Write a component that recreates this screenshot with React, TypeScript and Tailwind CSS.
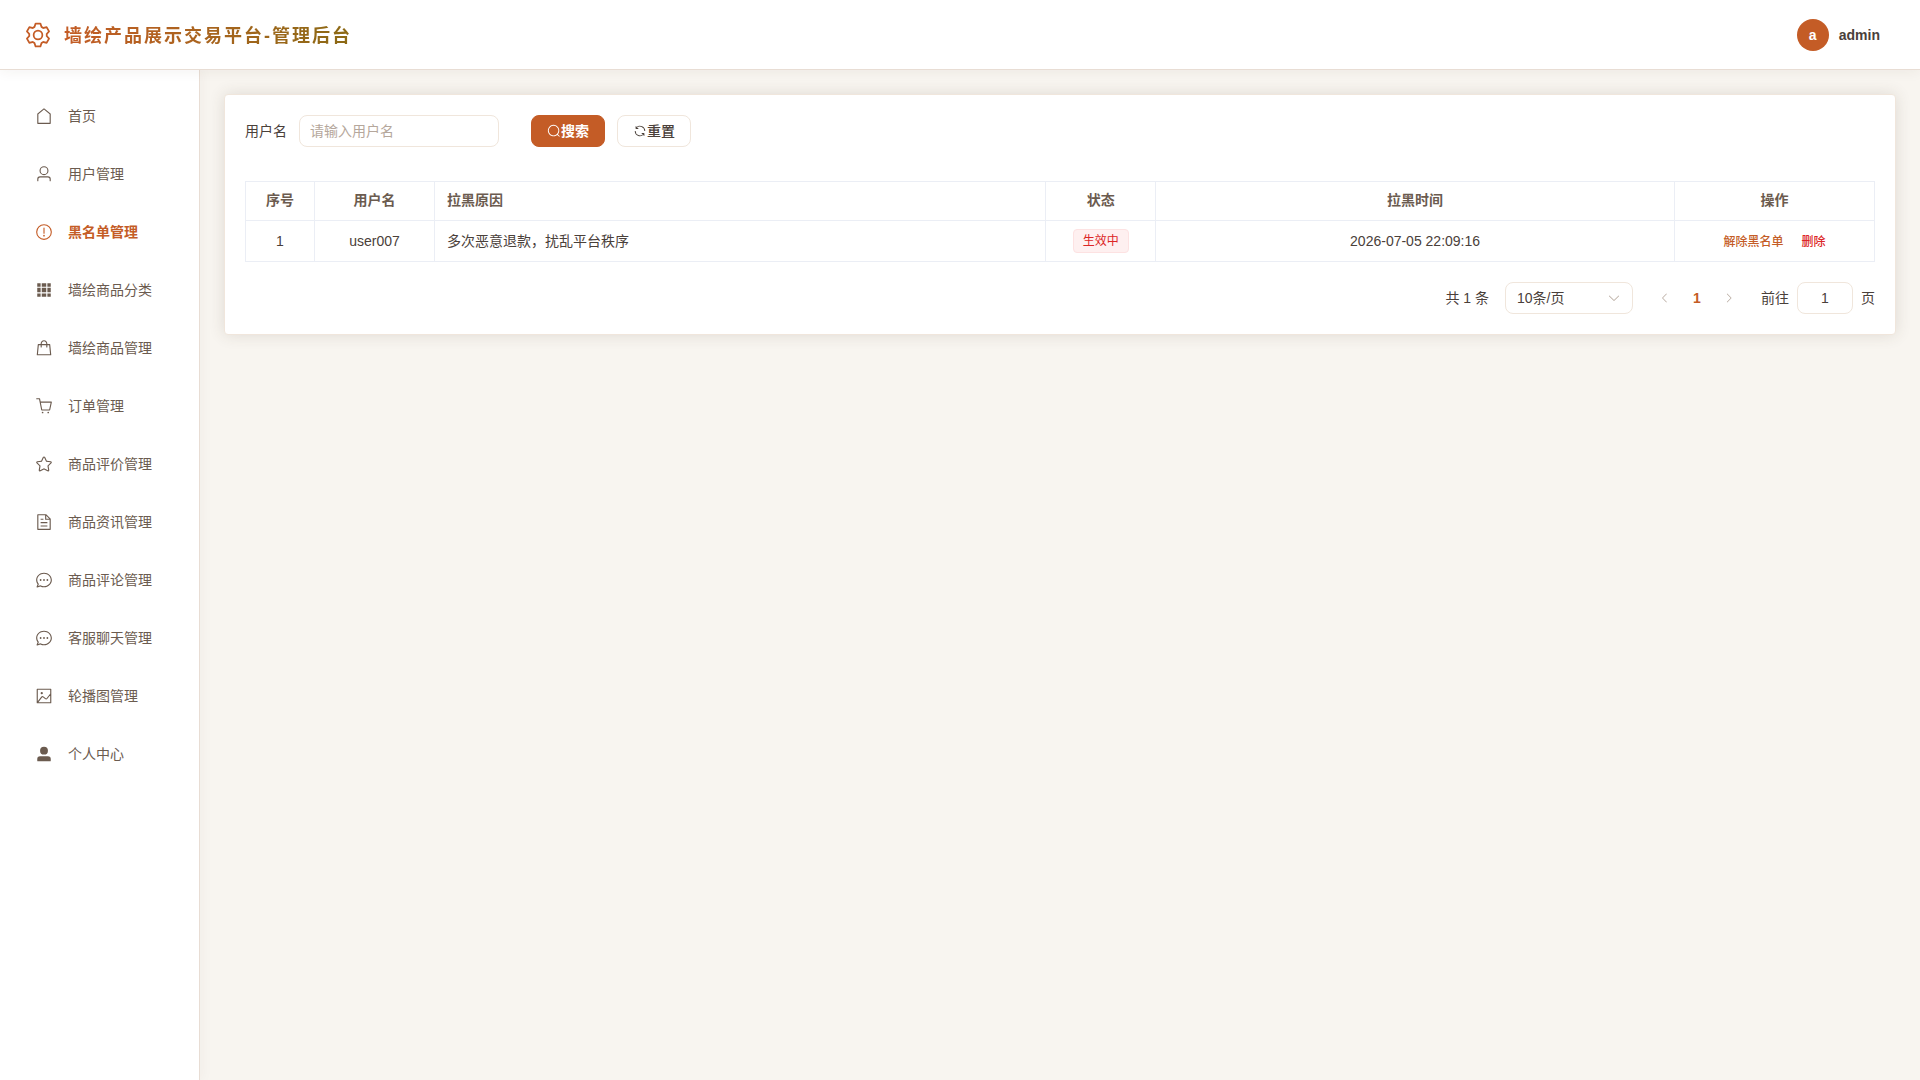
import React, { useState } from 'react';

const ICONS = {
  setting:
    'M600.704 64a32 32 0 0 1 30.464 22.208l35.2 109.376c14.784 7.232 28.928 15.36 42.432 24.512l112.384-24.192a32 32 0 0 1 34.432 15.36L944.32 364.8a32 32 0 0 1-4.032 37.504l-77.12 85.12a357.12 357.12 0 0 1 0 49.024l77.12 85.248a32 32 0 0 1 4.032 37.504l-88.704 153.6a32 32 0 0 1-34.432 15.296L708.8 803.904c-13.44 9.088-27.648 17.28-42.368 24.512l-35.264 109.376A32 32 0 0 1 600.704 960H423.296a32 32 0 0 1-30.464-22.208L357.696 828.48a351.616 351.616 0 0 1-42.56-24.64l-112.32 24.256a32 32 0 0 1-34.432-15.36L79.68 659.2a32 32 0 0 1 4.032-37.504l77.12-85.248a357.12 357.12 0 0 1 0-48.896l-77.12-85.248A32 32 0 0 1 79.68 364.8l88.704-153.6a32 32 0 0 1 34.432-15.296l112.32 24.256c13.568-9.152 27.776-17.408 42.56-24.64l35.2-109.312A32 32 0 0 1 423.232 64H600.64zm-23.424 64H446.72l-36.352 113.088-24.512 11.968a294.113 294.113 0 0 0-34.816 20.096l-22.656 15.36-116.224-25.088-65.28 113.152 79.68 88.192-1.92 27.136a293.12 293.12 0 0 0 0 40.192l1.92 27.136-79.808 88.192 65.344 113.152 116.224-25.024 22.656 15.296a294.113 294.113 0 0 0 34.816 20.096l24.512 11.968L446.72 896h130.688l36.48-113.152 24.448-11.904a288.282 288.282 0 0 0 34.752-20.096l22.592-15.296 116.288 25.024 65.28-113.152-79.744-88.192 1.92-27.136a293.12 293.12 0 0 0 0-40.256l-1.92-27.136 79.808-88.128-65.344-113.152-116.288 24.96-22.592-15.232a287.616 287.616 0 0 0-34.752-20.096l-24.448-11.904L577.344 128zM512 320a192 192 0 1 1 0 384 192 192 0 0 1 0-384zm0 64a128 128 0 1 0 0 256 128 128 0 0 0 0-256z',
  house:
    'M192 413.952V896h640V413.952L512 147.328 192 413.952zM139.52 374.4l352-293.312a32 32 0 0 1 40.96 0l352 293.312A32 32 0 0 1 896 398.976V928a32 32 0 0 1-32 32H160a32 32 0 0 1-32-32V398.976a32 32 0 0 1 11.52-24.576z',
  user:
    'M512 512a192 192 0 1 0 0-384 192 192 0 0 0 0 384zm0 64a256 256 0 1 1 0-512 256 256 0 0 1 0 512zm320 320v-96a96 96 0 0 0-96-96H288a96 96 0 0 0-96 96v96a32 32 0 1 1-64 0v-96a160 160 0 0 1 160-160h448a160 160 0 0 1 160 160v96a32 32 0 1 1-64 0z',
  warning:
    'M512 64a448 448 0 1 1 0 896 448 448 0 0 1 0-896zm0 832a384 384 0 0 0 0-768 384 384 0 0 0 0 768zm48-176a48 48 0 1 1-96 0 48 48 0 0 1 96 0zm-48-464a32 32 0 0 1 32 32v288a32 32 0 0 1-64 0V288a32 32 0 0 1 32-32z',
  grid:
    'M640 384v256H384V384h256zm64 0h192v256H704V384zm-64 512H384V704h256v192zm64 0V704h192v192H704zm-64-768v192H384V128h256zm64 0h192v192H704V128zM320 384v256H128V384h192zm0 512H128V704h192v192zm0-768v192H128V128h192z',
  goods:
    'M320 288v-22.336C320 154.688 405.504 64 512 64s192 90.688 192 201.664v22.4h131.072a32 32 0 0 1 31.808 28.8l57.6 576a32 32 0 0 1-31.808 35.2H131.328a32 32 0 0 1-31.808-35.2l57.6-576a32 32 0 0 1 31.808-28.8H320zm64 0h256v-22.336C640 189.248 582.272 128 512 128c-70.272 0-128 61.248-128 137.664v22.4zm-64 64H217.92l-51.2 512h690.56l-51.264-512H704v96a32 32 0 1 1-64 0v-96H384v96a32 32 0 0 1-64 0v-96z',
  cart:
    'M432 928a48 48 0 1 1 0-96 48 48 0 0 1 0 96zm320 0a48 48 0 1 1 0-96 48 48 0 0 1 0 96zM96 128a32 32 0 0 1 0-64h160a32 32 0 0 1 31.36 25.728L320.64 256H928a32 32 0 0 1 31.296 38.72l-96 448A32 32 0 0 1 832 768H384a32 32 0 0 1-31.36-25.728L229.76 128H96zm314.24 576h395.904l82.304-384H333.44l76.8 384z',
  star:
    'm512 747.84 228.16 119.936a6.4 6.4 0 0 0 9.28-6.72l-43.52-254.08 184.512-179.904a6.4 6.4 0 0 0-3.52-10.88l-255.104-37.12L517.76 147.904a6.4 6.4 0 0 0-11.52 0L392.192 379.072l-255.104 37.12a6.4 6.4 0 0 0-3.52 10.88L318.08 606.976l-43.584 254.08a6.4 6.4 0 0 0 9.28 6.72L512 747.84zM313.6 924.48a70.4 70.4 0 0 1-102.144-74.24l37.888-220.928L88.96 472.96A70.4 70.4 0 0 1 128 352.896l221.76-32.256 99.2-200.96a70.4 70.4 0 0 1 126.208 0l99.2 200.96 221.824 32.256a70.4 70.4 0 0 1 39.04 120.064L774.72 629.376l37.888 220.928a70.4 70.4 0 0 1-102.144 74.24L512 820.096l-198.4 104.32z',
  document:
    'M832 384H576V128H192v768h640V384zm-26.496-64L640 154.496V320h165.504zM160 64h480l256 256v608a32 32 0 0 1-32 32H160a32 32 0 0 1-32-32V96a32 32 0 0 1 32-32zm160 448h384v64H320v-64zm0-192h160v64H320v-64zm0 384h384v64H320v-64z',
  chat:
    'm174.72 855.68 135.296-45.12 23.68 11.84C388.096 849.536 448.576 864 512 864c211.84 0 384-166.784 384-352S723.84 160 512 160 128 326.784 128 512c0 69.12 24.96 139.264 70.848 199.232l22.08 28.8-46.272 115.584zm-45.248 82.56A32 32 0 0 1 89.6 896l58.368-145.92C94.72 680.32 64 596.864 64 512 64 299.904 256 96 512 96s448 203.904 448 416-192 416-448 416a461.056 461.056 0 0 1-206.912-48.384l-175.616 58.56zM512 563.2a51.2 51.2 0 1 1 0-102.4 51.2 51.2 0 0 1 0 102.4zm192 0a51.2 51.2 0 1 1 0-102.4 51.2 51.2 0 0 1 0 102.4zm-384 0a51.2 51.2 0 1 1 0-102.4 51.2 51.2 0 0 1 0 102.4z',
  picture:
    'M160 160v704h704V160H160zm-32-64h768a32 32 0 0 1 32 32v768a32 32 0 0 1-32 32H128a32 32 0 0 1-32-32V128a32 32 0 0 1 32-32zM384 288q64 0 64 64t-64 64q-64 0-64-64t64-64zM185.408 876.992l-50.816-38.912L350.72 556.032a96 96 0 0 1 134.592-17.856l1.856 1.472 122.88 99.136a32 32 0 0 0 44.992-4.864l216-269.888 49.92 39.936-215.808 269.824-.256.32a96 96 0 0 1-135.04 14.464l-122.88-99.072-.64-.512a32 32 0 0 0-44.8 5.952L185.408 876.992z',
  userFilled:
    'M288 320a224 224 0 1 0 448 0 224 224 0 1 0-448 0zm544 608H160a32 32 0 0 1-32-32v-96a160 160 0 0 1 160-160h448a160 160 0 0 1 160 160v96a32 32 0 0 1-32 32z',
  search:
    'm795.904 750.72 124.992 124.928a32 32 0 0 1-45.248 45.248L750.656 795.904a416 416 0 1 1 45.248-45.248zM480 832a352 352 0 1 0 0-704 352 352 0 0 0 0 704z',
  refresh:
    'M771.776 794.88A384 384 0 0 1 128 512h64a320 320 0 0 0 555.712 216.448H654.72a32 32 0 1 1 0-64h149.056a32 32 0 0 1 32 32v148.928a32 32 0 1 1-64 0v-50.56zM276.288 295.616h92.992a32 32 0 0 1 0 64H220.16a32 32 0 0 1-32-32V178.56a32 32 0 0 1 64 0v50.56A384 384 0 0 1 896.128 512h-64a320 320 0 0 0-555.776-216.384z',
  arrowDown:
    'M831.872 340.864 512 652.672 192.128 340.864a30.592 30.592 0 0 0-42.752 0 29.12 29.12 0 0 0 0 41.6L489.664 714.24a32 32 0 0 0 44.672 0l340.288-331.712a29.12 29.12 0 0 0 0-41.728 30.592 30.592 0 0 0-42.752 0z',
  arrowLeft:
    'M609.408 149.376 277.76 489.6a32 32 0 0 0 0 44.672l331.648 340.352a29.12 29.12 0 0 0 41.728 0 30.592 30.592 0 0 0 0-42.752L339.264 511.936l311.872-319.872a30.592 30.592 0 0 0 0-42.688 29.12 29.12 0 0 0-41.728 0z',
  arrowRight:
    'M340.864 149.312a30.592 30.592 0 0 0 0 42.752L652.736 512 340.864 831.872a30.592 30.592 0 0 0 0 42.752 29.12 29.12 0 0 0 41.728 0L714.24 534.336a32 32 0 0 0 0-44.672L382.592 149.376a29.12 29.12 0 0 0-41.728 0z',
};

type IconName = keyof typeof ICONS;

const Icon: React.FC<{ name: IconName; className: string }> = ({ name, className }) => (
  <svg viewBox="0 0 1024 1024" fill="currentColor" aria-hidden="true" className={className}>
    <path d={ICONS[name]} />
  </svg>
);

const menuItems: { label: string; icon: IconName; active?: boolean }[] = [
  { label: '首页', icon: 'house' },
  { label: '用户管理', icon: 'user' },
  { label: '黑名单管理', icon: 'warning', active: true },
  { label: '墙绘商品分类', icon: 'grid' },
  { label: '墙绘商品管理', icon: 'goods' },
  { label: '订单管理', icon: 'cart' },
  { label: '商品评价管理', icon: 'star' },
  { label: '商品资讯管理', icon: 'document' },
  { label: '商品评论管理', icon: 'chat' },
  { label: '客服聊天管理', icon: 'chat' },
  { label: '轮播图管理', icon: 'picture' },
  { label: '个人中心', icon: 'userFilled' },
];

interface BlacklistRow {
  id: number;
  username: string;
  reason: string;
  status: string;
  time: string;
}

const rows: BlacklistRow[] = [
  {
    id: 1,
    username: 'user007',
    reason: '多次恶意退款，扰乱平台秩序',
    status: '生效中',
    time: '2026-07-05 22:09:16',
  },
];

const Header: React.FC = () => (
  <header className="relative z-20 flex h-[70px] shrink-0 items-center justify-between border-b border-[#e8ddd4] bg-white pl-6 pr-10 shadow-[0_2px_12px_rgba(74,55,40,0.06)]">
    <div className="flex items-center gap-3">
      <Icon name="setting" className="size-7 text-[#c45c26]" />
      <h1 className="bg-linear-to-r from-[#c45c26] to-[#8b6914] bg-clip-text pt-[2px] text-lg font-bold tracking-[2px] text-transparent">
        墙绘产品展示交易平台-管理后台
      </h1>
    </div>
    <button type="button" className="flex items-center gap-[10px] font-bold">
      <span className="flex size-8 items-center justify-center rounded-full bg-[#c45c26] text-white">a</span>
      <span>admin</span>
    </button>
  </header>
);

const Sidebar: React.FC = () => (
  <nav className="relative z-10 w-[200px] shrink-0 border-r border-[#e8ddd4] bg-white pt-[21px] shadow-[2px_0_12px_rgba(74,55,40,0.04)]">
    <ul className="flex flex-col gap-2">
      {menuItems.map((item) => (
        <li key={item.label}>
          <a
            href="#"
            className={
              item.active
                ? 'flex h-[50px] items-center gap-[15px] pl-[35px] font-bold text-[#c45c26]'
                : 'flex h-[50px] items-center gap-[15px] pl-[35px] text-[#6b5b4f]'
            }
          >
            <Icon name={item.icon} className="size-[18px]" />
            <span>{item.label}</span>
          </a>
        </li>
      ))}
    </ul>
  </nav>
);

const SearchForm: React.FC = () => {
  const [username, setUsername] = useState('');

  return (
    <form className="flex items-center" onSubmit={(e) => e.preventDefault()}>
      <label htmlFor="username" className="pr-3">
        用户名
      </label>
      <input
        id="username"
        type="text"
        value={username}
        onChange={(e) => setUsername(e.target.value)}
        placeholder="请输入用户名"
        className="h-8 w-[200px] rounded-lg border border-[#f0e6dc] bg-white px-[10px] outline-none placeholder:text-[#b5a79c]"
      />
      <button
        type="submit"
        className="ml-8 flex h-8 items-center rounded-lg border border-[#c45c26] bg-[#c45c26] px-[15px] font-bold text-white"
      >
        <Icon name="search" className="size-[14px]" />
        搜索
      </button>
      <button
        type="button"
        onClick={() => setUsername('')}
        className="ml-3 flex h-8 items-center rounded-lg border border-[#f0e6dc] bg-white px-[15px] font-medium"
      >
        <Icon name="refresh" className="size-[14px]" />
        重置
      </button>
    </form>
  );
};

const BlacklistTable: React.FC = () => (
  <table className="mt-[34px] w-full table-fixed border-collapse text-center">
    <colgroup>
      <col className="w-[69px]" />
      <col className="w-[120px]" />
      <col />
      <col className="w-[110px]" />
      <col className="w-[31.85%]" />
      <col className="w-[200px]" />
    </colgroup>
    <thead>
      <tr className="h-[39px] text-[#6b5b4f]">
        <th className="border border-[#ebeef5] pb-[2px]">序号</th>
        <th className="border border-[#ebeef5] pb-[2px]">用户名</th>
        <th className="border border-[#ebeef5] px-3 pb-[2px] text-left">拉黑原因</th>
        <th className="border border-[#ebeef5] pb-[2px]">状态</th>
        <th className="border border-[#ebeef5] pb-[2px]">拉黑时间</th>
        <th className="border border-[#ebeef5] pb-[2px]">操作</th>
      </tr>
    </thead>
    <tbody>
      {rows.map((row) => (
        <tr key={row.id} className="h-[41px]">
          <td className="border border-[#ebeef5]">{row.id}</td>
          <td className="border border-[#ebeef5]">{row.username}</td>
          <td className="border border-[#ebeef5] px-3 text-left">{row.reason}</td>
          <td className="border border-[#ebeef5]">
            <span className="inline-flex h-6 items-center rounded border border-[#fde2e2] bg-[#fef0f0] px-[9px] align-middle text-xs text-[#dc2626]">
              {row.status}
            </span>
          </td>
          <td className="border border-[#ebeef5]">{row.time}</td>
          <td className="border border-[#ebeef5]">
            <div className="flex items-center justify-center gap-[18px] pt-[2px] text-xs font-medium">
              <button type="button" className="text-[#c45c26]">
                解除黑名单
              </button>
              <button type="button" className="text-[#dc2626]">
                删除
              </button>
            </div>
          </td>
        </tr>
      ))}
    </tbody>
  </table>
);

const Pagination: React.FC = () => {
  const [page, setPage] = useState('1');

  return (
    <div className="mt-5 flex items-center justify-end">
      <span>共 1 条</span>
      <div className="relative ml-4">
        <select
          aria-label="每页条数"
          defaultValue="10"
          className="h-8 w-32 appearance-none rounded-lg border border-[#f0e6dc] bg-white px-[11px] outline-none"
        >
          <option value="10">10条/页</option>
          <option value="20">20条/页</option>
          <option value="50">50条/页</option>
        </select>
        <Icon
          name="arrowDown"
          className="pointer-events-none absolute right-3 top-[9px] size-[14px] text-[#b5a79c]"
        />
      </div>
      <div className="mx-4 flex">
        <button type="button" disabled aria-label="上一页" className="flex size-8 items-center justify-center text-[#b5a79c]">
          <Icon name="arrowLeft" className="size-3" />
        </button>
        <button type="button" aria-current="page" className="size-8 font-bold text-[#c45c26]">
          1
        </button>
        <button type="button" disabled aria-label="下一页" className="flex size-8 items-center justify-center text-[#b5a79c]">
          <Icon name="arrowRight" className="size-3" />
        </button>
      </div>
      <label htmlFor="jumper">前往</label>
      <input
        id="jumper"
        type="text"
        value={page}
        onChange={(e) => setPage(e.target.value)}
        className="mx-2 h-8 w-14 rounded-lg border border-[#f0e6dc] bg-white text-center outline-none"
      />
      <span>页</span>
    </div>
  );
};

export default function App() {
  return (
    <div className="flex min-h-screen flex-col bg-[#f8f5f0] font-['Liberation_Sans','Noto_Sans_CJK_SC',sans-serif] text-sm text-[#4a403a]">
      <Header />
      <div className="flex flex-1">
        <Sidebar />
        <main className="min-w-0 flex-1 px-6 pt-6">
          <section className="rounded border border-[#f0e6dc] bg-white p-5 shadow-[0_0_16px_rgba(74,55,40,0.14)]">
            <SearchForm />
            <BlacklistTable />
            <Pagination />
          </section>
        </main>
      </div>
    </div>
  );
}
